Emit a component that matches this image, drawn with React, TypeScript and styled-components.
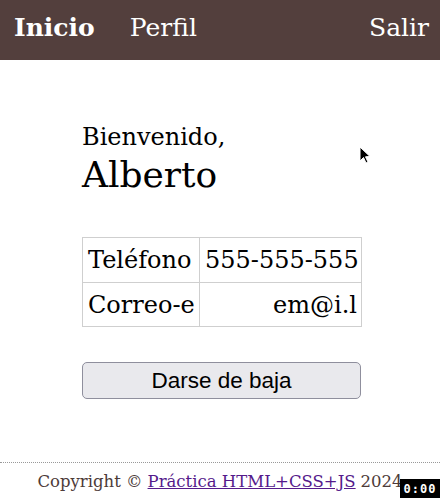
import React from "react";
import styled, { createGlobalStyle } from "styled-components";

const Global = createGlobalStyle`
  html, body { margin: 0; padding: 0; background: #fff; }
  body { font-family: "DejaVu Serif", Georgia, serif; color: #000; }
`;

const Header = styled.header`
  display: flex;
  align-items: center;
  height: 60px;
  padding: 0 11px 6px 14px;
  box-sizing: border-box;
  background: #533f3d;
`;

const NavLink = styled.a<{ $bold?: boolean; $push?: boolean }>`
  color: #fff;
  text-decoration: none;
  font-size: 25px;
  font-weight: ${(p) => (p.$bold ? 700 : 400)};
  margin-right: 35px;
  ${(p) => (p.$push ? "margin-left: auto; margin-right: 0;" : "")}
`;

const Main = styled.main`
  width: 279px;
  margin: 0 0 0 82px;
  padding-top: 62px;
`;

const Greeting = styled.p`
  margin: 0;
  font-size: 24px;
  line-height: 30px;
`;

const Name = styled.h1`
  margin: 0;
  font-size: 36px;
  font-weight: 400;
  line-height: 46px;
`;

const Table = styled.table`
  margin-top: 39px;
  width: 279px;
  border-collapse: collapse;
  table-layout: fixed;
`;

const Col = styled.col<{ $w: number }>`
  width: ${(p) => p.$w}px;
`;

const Row = styled.tr<{ $h: number }>`
  height: ${(p) => p.$h}px;
`;

const Cell = styled.td<{ $right?: boolean }>`
  border: 1px solid #cfcfcf;
  font-size: 24px;
  padding: 0 4px 0 5px;
  text-align: ${(p) => (p.$right ? "right" : "left")};
  white-space: nowrap;
  overflow: hidden;
`;

const Button = styled.button`
  display: block;
  width: 279px;
  height: 37px;
  margin-top: 35px;
  padding: 0;
  background: #e9e9ed;
  border: 1px solid #8f8f9d;
  border-radius: 5px;
  font-family: "Liberation Sans", Arial, sans-serif;
  font-size: 22.5px;
  color: #000;
`;

const Footer = styled.footer`
  border-top: 1px dotted #999;
  margin-top: 63px;
  height: 36px;
  display: flex;
  justify-content: center;
  align-items: center;
  font-size: 16.5px;
  color: #4d3b39;
  white-space: nowrap;
`;

const FooterLink = styled.a`
  color: #551a8b;
  margin: 0 5px;
`;

const Timer = styled.div`
  position: fixed;
  right: 0;
  bottom: 0;
  width: 40px;
  height: 19px;
  background: #000;
  color: #fff;
  font-family: "DejaVu Sans Mono", monospace;
  font-size: 12px;
  font-weight: 700;
  letter-spacing: 1px;
  display: flex;
  align-items: center;
  justify-content: center;
`;

const Cursor = styled.svg`
  position: fixed;
  left: 358px;
  top: 146px;
`;

export default function App() {
  return (
    <>
      <Global />
      <Header>
        <NavLink href="#" $bold>Inicio</NavLink>
        <NavLink href="#">Perfil</NavLink>
        <NavLink href="#" $push>Salir</NavLink>
      </Header>
      <Main>
        <Greeting>Bienvenido,</Greeting>
        <Name>Alberto</Name>
        <Table>
          <colgroup>
            <Col $w={117} />
            <Col $w={162} />
          </colgroup>
          <tbody>
            <Row $h={45}>
              <Cell>Teléfono</Cell>
              <Cell $right>555-555-555</Cell>
            </Row>
            <Row $h={44}>
              <Cell>Correo-e</Cell>
              <Cell $right>em@i.l</Cell>
            </Row>
          </tbody>
        </Table>
        <Button>Darse de baja</Button>
      </Main>
      <Footer>
        Copyright ©<FooterLink href="#">Práctica HTML+CSS+JS</FooterLink>2024
      </Footer>
      <Timer>0:00</Timer>
      <Cursor width="14" height="20" viewBox="0 0 14 20">
        <path d="M2 1 L2 15 L5.5 11.5 L8 17 L10 16 L7.5 10.8 L12 10.5 Z" fill="#000" stroke="#fff" strokeWidth="1" />
      </Cursor>
    </>
  );
}
